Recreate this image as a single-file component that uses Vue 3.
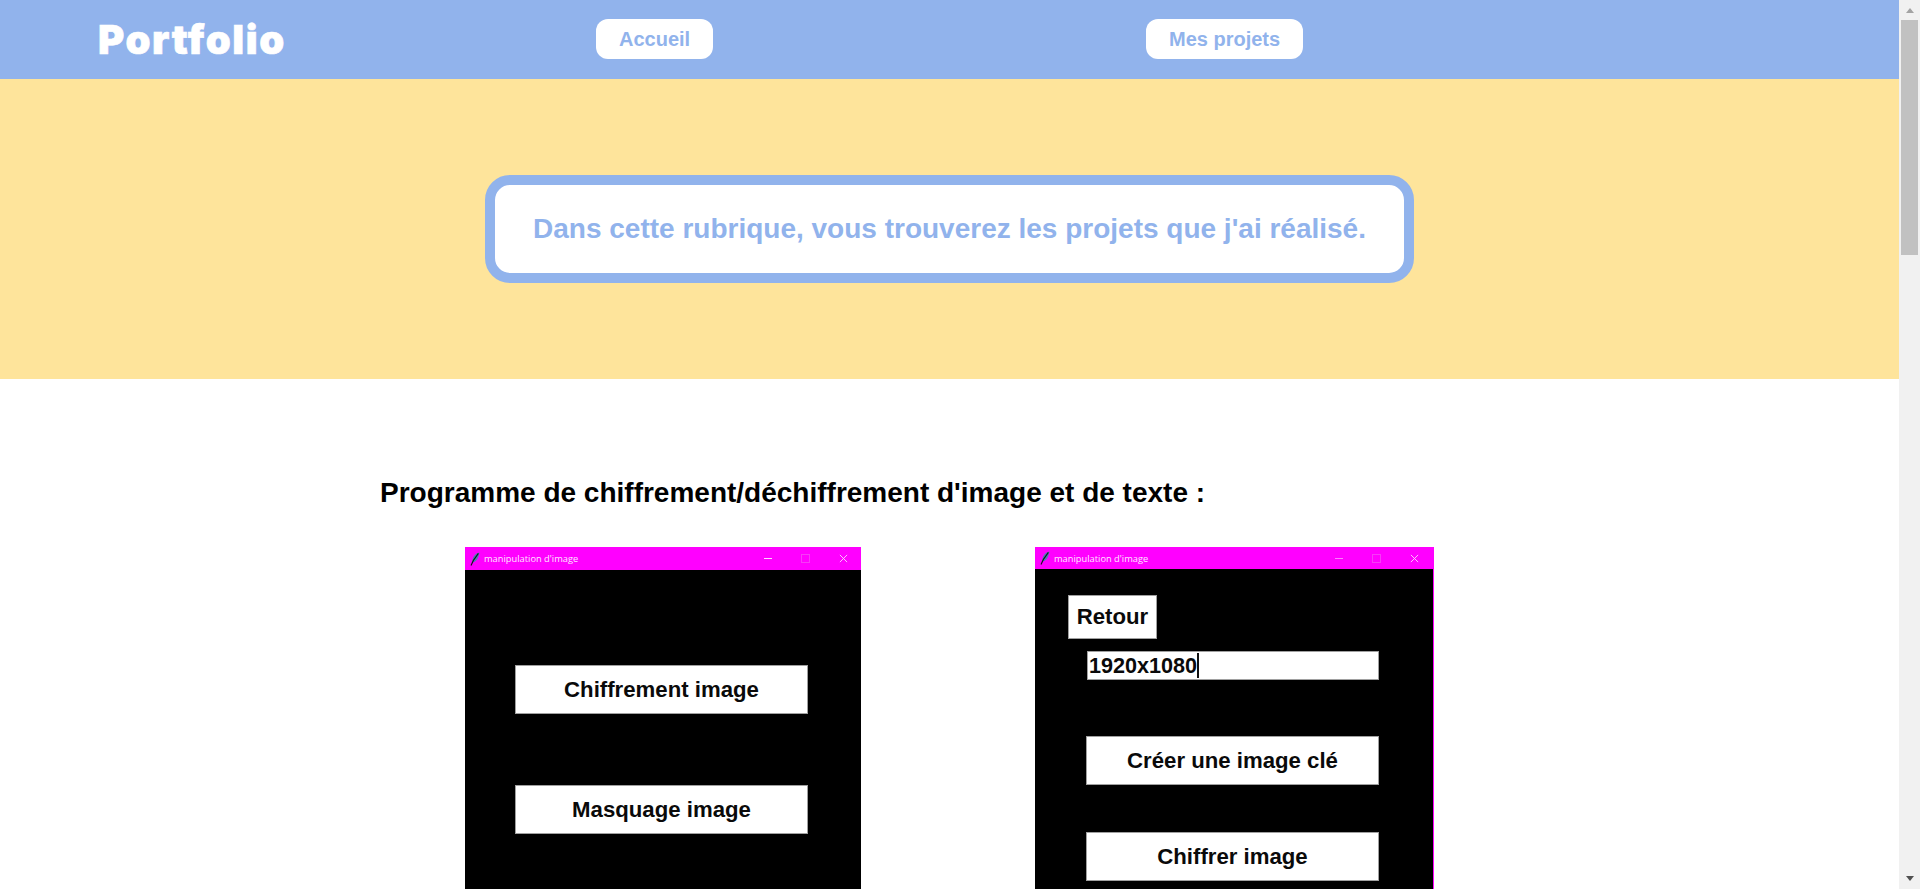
<script setup>
const leftButtons = ["Chiffrement image", "Masquage image"];
</script>

<template>
  <div class="page">
    <main class="content">
      <header class="nav">
        <div class="logo">Portfolio</div>
        <div class="nav-cell"><a class="nav-link">Accueil</a></div>
        <div class="nav-cell"><a class="nav-link">Mes projets</a></div>
      </header>

      <section class="banner">
        <p class="banner-box">Dans cette rubrique, vous trouverez les projets que j'ai réalisé.</p>
      </section>

      <section class="project">
        <h2 class="project-title">Programme de chiffrement/déchiffrement d'image et de texte :</h2>
        <div class="shots">
          <div class="window window-left">
            <div class="titlebar">
              <svg class="feather" viewBox="0 0 10 14">
                <path d="M9.4 .4C6 1 3.4 3.6 2.6 7c-.3 1.4-.3 2.6 0 3.6 2.6-.6 4.6-2.6 5.6-5.4.6-1.8 1.2-3.4 1.2-4.8z" fill="#4a7fb5" />
                <path d="M8.4 1.4 3.4 8.4 1 13.6" fill="none" stroke="#10131c" stroke-width="1.1" />
              </svg>
              <span class="window-name">manipulation d'image</span>
              <span class="controls">
                <i class="ctl-min"></i>
                <i class="ctl-max"></i>
                <svg class="ctl-close" viewBox="0 0 10 10"><path d="M1 1l8 8M9 1l-8 8" stroke="#ffd6ff" stroke-width="1" /></svg>
              </span>
            </div>
            <div class="window-body left-body">
              <button v-for="label in leftButtons" :key="label" class="tk-button">{{ label }}</button>
            </div>
          </div>

          <div class="window window-right">
            <div class="titlebar">
              <svg class="feather" viewBox="0 0 10 14">
                <path d="M9.4 .4C6 1 3.4 3.6 2.6 7c-.3 1.4-.3 2.6 0 3.6 2.6-.6 4.6-2.6 5.6-5.4.6-1.8 1.2-3.4 1.2-4.8z" fill="#4a7fb5" />
                <path d="M8.4 1.4 3.4 8.4 1 13.6" fill="none" stroke="#10131c" stroke-width="1.1" />
              </svg>
              <span class="window-name">manipulation d'image</span>
              <span class="controls">
                <i class="ctl-min dim"></i>
                <i class="ctl-max"></i>
                <svg class="ctl-close" viewBox="0 0 10 10"><path d="M1 1l8 8M9 1l-8 8" stroke="#ffd6ff" stroke-width="1" /></svg>
              </span>
            </div>
            <div class="window-body right-body">
              <button class="tk-button back">Retour</button>
              <div class="tk-input">1920x1080<i class="caret"></i></div>
              <button class="tk-button key">Créer une image clé</button>
              <button class="tk-button cipher">Chiffrer image</button>
            </div>
          </div>
        </div>
      </section>
    </main>

    <aside class="scrollbar">
      <span class="arrow arrow-up"></span>
      <div class="track"><div class="thumb"></div></div>
      <span class="arrow arrow-down"></span>
    </aside>
  </div>
</template>

<style>
html,
body {
  margin: 0;
  overflow: hidden;
  background: #fff;
}
</style>

<style scoped>
.page {
  display: flex;
  height: 889px;
  overflow: hidden;
  font-family: "Liberation Sans", Arial, sans-serif;
}

.content {
  flex: 1;
  min-width: 0;
}

.nav {
  height: 79px;
  background-color: #91b3ec;
  display: grid;
  grid-template-columns: 498px 550px auto;
  align-items: center;
  padding-left: 98px;
  box-sizing: border-box;
  padding-bottom: 1px;
}

.logo {
  color: #fff;
  font-family: Inter, "Liberation Sans", sans-serif;
  font-size: 40px;
  font-weight: 900;
  font-variant-ligatures: none;
  font-feature-settings: "liga" 0, "calt" 0;
  letter-spacing: 1.6px;
  -webkit-text-stroke: 0.6px #fff;
  line-height: 44px;
  margin-top: 1px;
}

.nav-cell {
  display: flex;
}

.nav-link {
  height: 40px;
  line-height: 40px;
  padding: 0 23px;
  background: #fff;
  border-radius: 12px;
  color: #91b3ec;
  font-size: 20px;
  font-weight: 700;
}

.banner {
  height: 300px;
  background-color: #fee49b;
  display: flex;
  justify-content: center;
  padding-top: 96px;
  box-sizing: border-box;
}

.banner-box {
  margin: 0;
  height: 108px;
  box-sizing: border-box;
  border: 10px solid #91b3ec;
  border-radius: 25px;
  background: #fff;
  padding: 0 38px;
  color: #91b3ec;
  font-size: 28px;
  font-weight: 700;
  line-height: 88px;
}

.project {
  padding: 0 0 0 380px;
}

.project-title {
  margin: 0;
  padding-top: 98px;
  font-size: 28px;
  line-height: 32px;
  font-weight: 700;
  color: #000;
}

.shots {
  display: flex;
  gap: 174px;
  margin: 38px 0 0 85px;
}

.window {
  width: 396px;
  height: 500px;
  background: #000;
}

.window-right {
  width: 399px;
  border-right: 1px solid #f0f;
  box-sizing: border-box;
}

.titlebar {
  height: 23px;
  background: #f0f;
  display: flex;
  align-items: center;
  padding-left: 5px;
  color: #ffe6ff;
}

.window-right .titlebar {
  height: 22px;
}

.feather {
  width: 10px;
  height: 14px;
  flex: none;
}

.window-name {
  margin-left: 4px;
  font-family: "Open Sans", sans-serif;
  font-size: 9.3px;
}

.controls {
  margin-left: auto;
  display: flex;
  align-items: center;
  gap: 29px;
  padding-right: 13px;
}

.window-right .controls {
  padding-right: 14px;
}

.ctl-min {
  width: 8px;
  height: 1px;
  background: #ffd6ff;
}

.ctl-min.dim {
  background: #ff7fff;
}

.ctl-max {
  width: 7px;
  height: 7px;
  border: 1px solid #f63cf6;
}

.ctl-close {
  width: 9px;
  height: 9px;
}

.window-body {
  display: flex;
  flex-direction: column;
  align-items: flex-start;
}

.left-body {
  padding: 95px 0 0 50px;
  gap: 71px;
}

.right-body {
  padding-top: 26px;
}

.tk-button {
  width: 293px;
  height: 49px;
  padding: 0;
  box-sizing: border-box;
  border: 1px solid #a0a0a0;
  background: #fff;
  color: #0a0a0a;
  font-family: "Liberation Sans", Arial, sans-serif;
  font-size: 22.2px;
  font-weight: 700;
}

.back {
  width: 89px;
  height: 44px;
  margin-left: 33px;
}

.tk-input {
  width: 292px;
  height: 29px;
  margin: 12px 0 0 52px;
  box-sizing: border-box;
  border: 1px solid #a0a0a0;
  background: #fff;
  padding-left: 1px;
  color: #0a0a0a;
  font-size: 21.6px;
  font-weight: 700;
  line-height: 26px;
  display: flex;
  align-items: center;
}

.caret {
  width: 1.5px;
  height: 25px;
  background: #111;
}

.key {
  margin: 56px 0 0 51px;
}

.cipher {
  margin: 47px 0 0 51px;
}

.scrollbar {
  width: 21px;
  flex: none;
  background: #f1f1f1;
  display: flex;
  flex-direction: column;
  align-items: center;
}

.arrow {
  flex: none;
  width: 0;
  height: 0;
  margin: 8px 0;
  border-left: 4.5px solid transparent;
  border-right: 4.5px solid transparent;
}

.arrow-up {
  border-bottom: 5px solid #a3a3a3;
}

.arrow-down {
  border-top: 5px solid #505050;
}

.track {
  flex: 1;
  align-self: stretch;
}

.thumb {
  width: 17px;
  height: 235px;
  margin: -1px 0 0 2px;
  background: #c1c1c1;
}
</style>
